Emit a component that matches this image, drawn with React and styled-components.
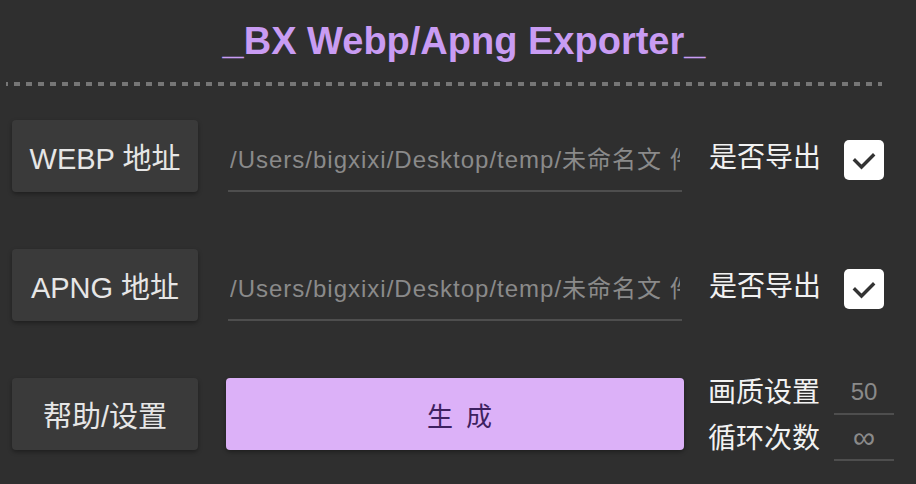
import React from "react";
import styled, { createGlobalStyle } from "styled-components";

const GlobalStyle = createGlobalStyle`
  html, body {
    margin: 0;
    padding: 0;
    background: #2f2f2f;
  }
  body {
    width: 916px;
    height: 484px;
    overflow: hidden;
    font-family: "Liberation Sans", "Noto Sans CJK SC", sans-serif;
  }
`;

const Page = styled.div`
  display: flex;
  flex-direction: column;
  width: 916px;
  height: 484px;
  background: #2f2f2f;
`;

const Title = styled.h1`
  margin: 0;
  padding: 19px 0 0 12px;
  height: 44px;
  line-height: 44px;
  text-align: center;
  font-size: 38px;
  font-weight: 700;
  color: #c99cf3;
`;

const Divider = styled.div`
  margin: 19px 34px 0 6px;
  height: 4px;
  background: repeating-linear-gradient(
    90deg,
    #767676 0 6px,
    transparent 6px 12px
  );
  background-position: -4px 0;
`;

const Rows = styled.div`
  display: flex;
  flex-direction: column;
  gap: 57px;
  margin-top: 34px;
`;

const Row = styled.div`
  display: flex;
  align-items: center;
  height: 72px;
  padding-left: 12px;
`;

const SideButton = styled.button`
  flex: none;
  width: 186px;
  height: 72px;
  border: none;
  border-radius: 4px;
  background: #3a3a3a;
  box-shadow: 0 2px 4px rgba(0, 0, 0, 0.35);
  color: #e6e6e6;
  font-family: "Liberation Sans", "Noto Sans CJK SC", sans-serif;
  font-size: 29px;
  padding: 0;
`;

const PathInput = styled.input`
  flex: none;
  box-sizing: border-box;
  width: 454px;
  height: 72px;
  margin-left: 30px;
  padding: 4px 2px 0;
  background: transparent;
  border: none;
  border-bottom: 2px solid #4e4e4e;
  outline: none;
  color: #8a8a8a;
  font-family: "Liberation Sans", "Noto Sans CJK SC", sans-serif;
  font-size: 24px;
  letter-spacing: 1px;
`;

const Label = styled.span`
  flex: none;
  margin-left: ${(p) => p.$gap || 0}px;
  margin-top: ${(p) => p.$drop || 0}px;
  color: #f2f2f2;
  font-size: 28px;
  line-height: 1;
`;

const CheckBox = styled.div`
  flex: none;
  width: 40px;
  height: 40px;
  margin: 8px 0 0 23px;
  border-radius: 5px;
  background: #ffffff;
  display: flex;
  align-items: center;
  justify-content: center;
`;

const Generate = styled.button`
  flex: none;
  width: 458px;
  height: 72px;
  margin-left: 28px;
  padding: 0 0 0 12px;
  border: none;
  border-radius: 4px;
  background: #dcb1f8;
  box-shadow: 0 2px 4px rgba(0, 0, 0, 0.35);
  color: #3d2160;
  font-family: "Liberation Sans", "Noto Sans CJK SC", sans-serif;
  font-size: 26px;
  letter-spacing: 3px;
`;

const Settings = styled.div`
  display: flex;
  flex-direction: column;
  gap: 2px;
  margin-left: 24px;
  margin-top: 4px;
`;

const SettingRow = styled.div`
  display: flex;
  align-items: center;
  height: 44px;
`;

const SmallInput = styled.input`
  box-sizing: border-box;
  width: 60px;
  height: 44px;
  margin-left: 14px;
  padding: 0;
  background: transparent;
  border: none;
  border-bottom: 2px solid #4e4e4e;
  outline: none;
  text-align: center;
  color: #8a8a8a;
  font-family: "Liberation Sans", "DejaVu Sans", sans-serif;
  font-size: ${(p) => (p.$big ? 31 : 24)}px;
`;

const Check = () => (
  <svg width="26" height="26" viewBox="0 0 26 26">
    <path
      d="M4 13.5 L10.5 20 L22 8.5"
      fill="none"
      stroke="#333"
      strokeWidth="3.4"
      strokeLinecap="square"
    />
  </svg>
);

const path = "/Users/bigxixi/Desktop/temp/未命名文 件夹/";

export default function App() {
  return (
    <Page>
      <GlobalStyle />
      <Title>_BX Webp/Apng Exporter_</Title>
      <Divider />
      <Rows>
        <Row>
          <SideButton>WEBP 地址</SideButton>
          <PathInput value={path} readOnly />
          <Label $gap={27} $drop={4}>是否导出</Label>
          <CheckBox>
            <Check />
          </CheckBox>
        </Row>
        <Row>
          <SideButton>APNG 地址</SideButton>
          <PathInput value={path} readOnly />
          <Label $gap={27} $drop={4}>是否导出</Label>
          <CheckBox>
            <Check />
          </CheckBox>
        </Row>
        <Row>
          <SideButton>帮助/设置</SideButton>
          <Generate>生 成</Generate>
          <Settings>
            <SettingRow>
              <Label>画质设置</Label>
              <SmallInput value="50" readOnly />
            </SettingRow>
            <SettingRow>
              <Label>循环次数</Label>
              <SmallInput value="∞" $big readOnly />
            </SettingRow>
          </Settings>
        </Row>
      </Rows>
    </Page>
  );
}
